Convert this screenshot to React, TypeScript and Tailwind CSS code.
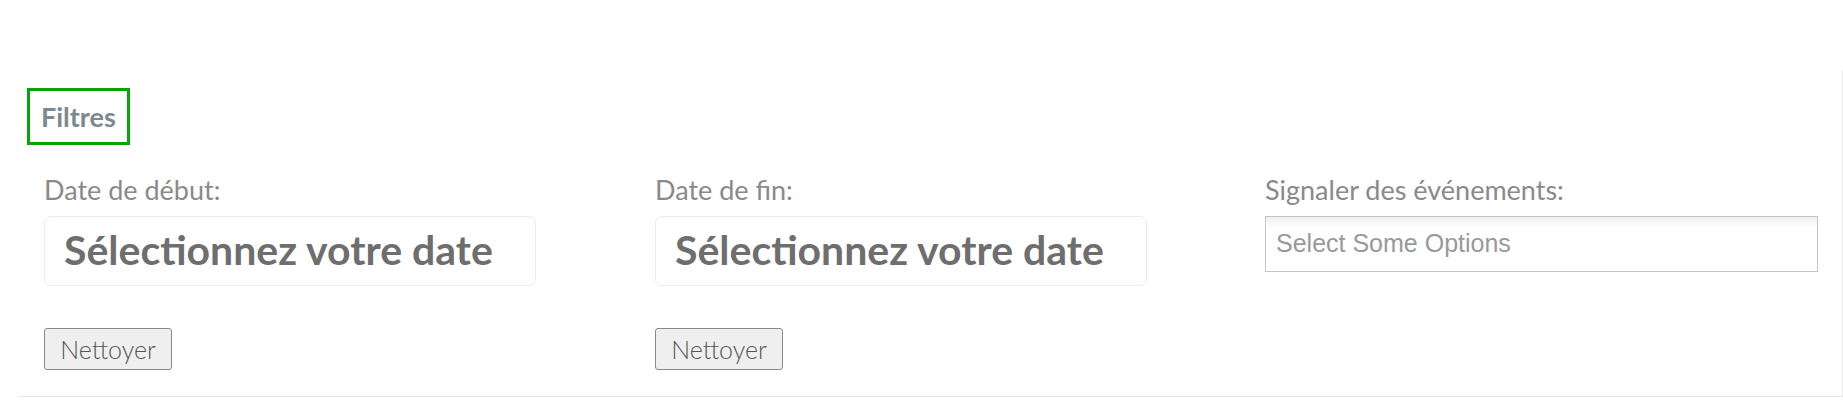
import React from "react";

const DateField: React.FC<{ label: string }> = ({ label }) => (
  <div className="flex flex-col">
    <label className="text-[27px] leading-[30px] text-[#8a8a8a] font-normal">{label}</label>
    <div className="mt-[11px] w-[492px] h-[70px] rounded-[7px] border border-[#ececec] bg-white flex items-center px-[19px]">
      <span className="text-[41px] leading-[48px] font-bold text-[#6e6e6e] -mt-[2px]">Sélectionnez votre date</span>
    </div>
    <div className="mt-[42px]">
      <button
        type="button"
        className="w-[128px] h-[42px] rounded-[3px] border border-[#8a8a8a] bg-[#efefef] text-[25px] leading-[30px] font-light text-[#555]"
      >
        Nettoyer
      </button>
    </div>
  </div>
);

export default function App() {
  return (
    <div className="min-h-screen bg-white pt-[70px] pl-[19px]" style={{ fontFamily: "Lato, 'Open Sans', sans-serif" }}>
      <div className="bg-white border-r border-b border-[#e9e9e9] h-[327px]">
        <div className="pt-[18px] pl-[8px]">
          <div className="inline-block border-[3px] border-[#08a308] px-[11px] py-[10px]">
            <span className="block text-[27px] leading-[31px] font-bold text-[#7d8990]">Filtres</span>
          </div>
        </div>

        <div className="flex pl-[25px] pt-[30px]">
          <div className="w-[611px]">
            <DateField label="Date de début:" />
          </div>
          <div className="w-[610px]">
            <DateField label="Date de fin:" />
          </div>
          <div className="w-[553px] flex flex-col">
            <label className="text-[27px] leading-[30px] text-[#8a8a8a]">Signaler des événements:</label>
            <div className="mt-[11px] h-[56px] border border-[#c5c5c5] bg-white bg-gradient-to-b from-[#f0f0f0] to-white to-[20%] flex items-center px-[10px]">
              <span className="text-[25px] text-[#999]" style={{ fontFamily: "'Liberation Sans', Arial, sans-serif" }}>
                Select Some Options
              </span>
            </div>
          </div>
        </div>
      </div>
    </div>
  );
}
